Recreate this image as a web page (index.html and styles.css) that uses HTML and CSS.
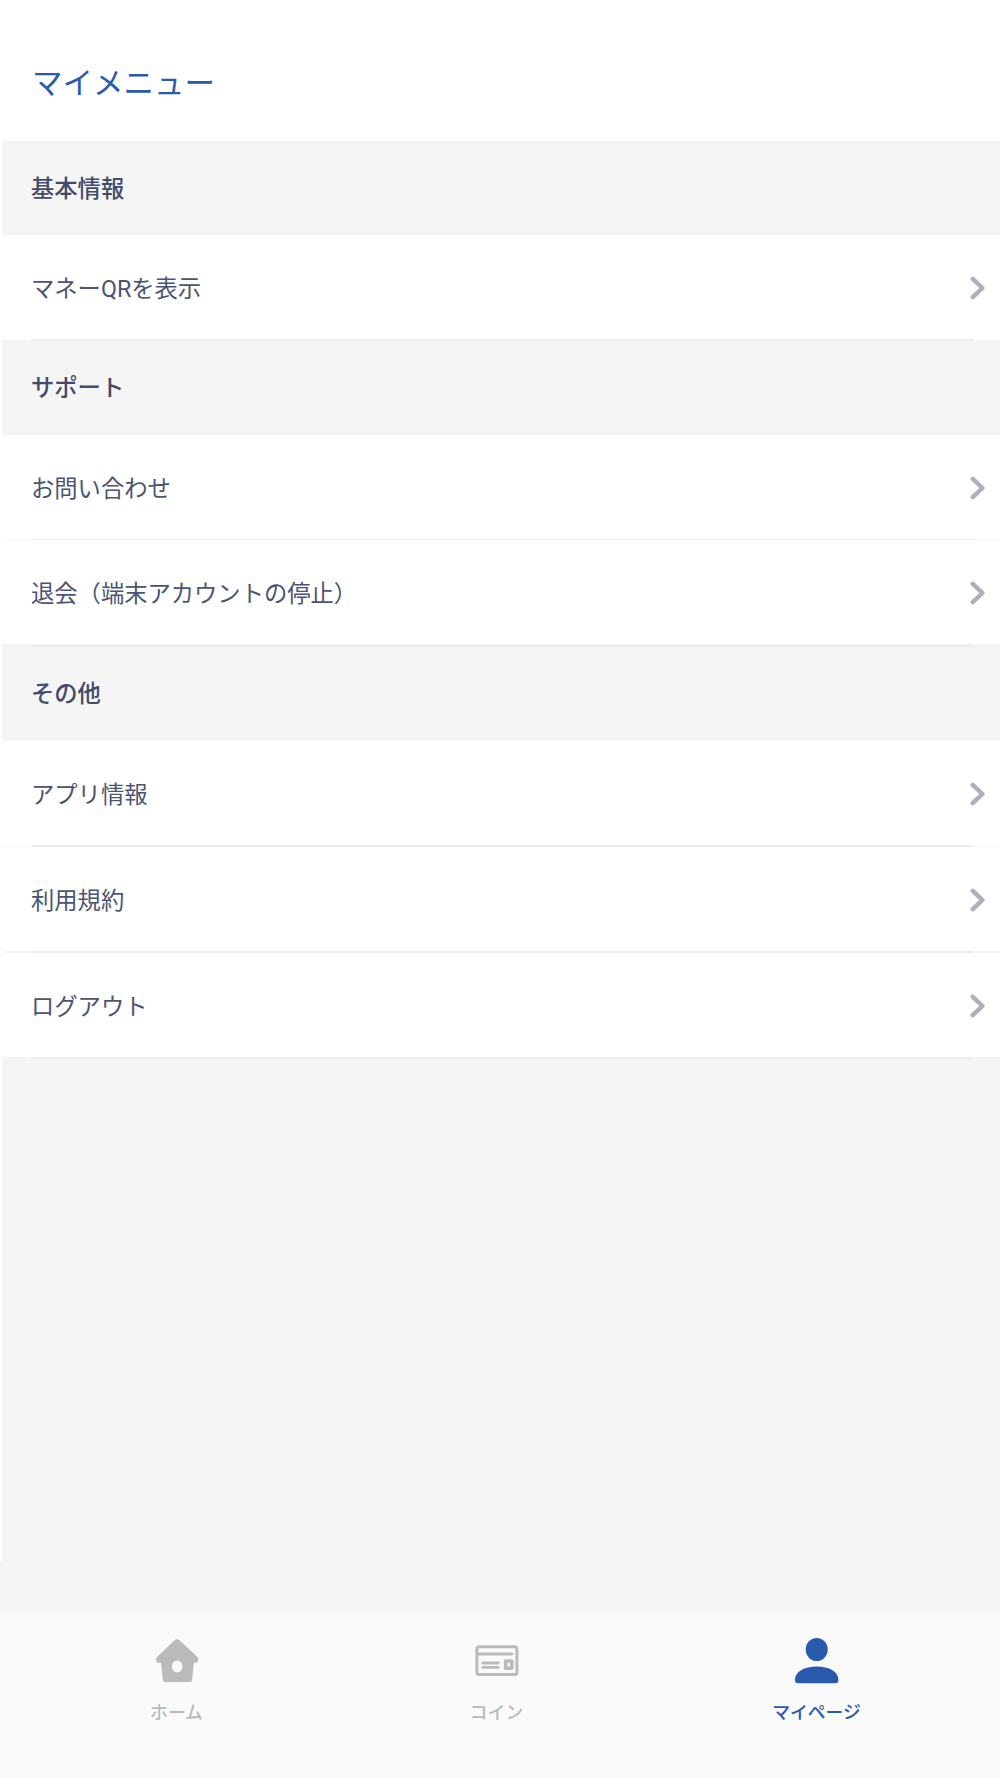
FILE: index.html
```html
<!DOCTYPE html>
<html lang="ja">
<head>
<meta charset="utf-8">
<title>マイメニュー</title>
<link rel="stylesheet" href="styles.css">
</head>
<body>
<svg class="defs" aria-hidden="true"><symbol id="chevron" viewBox="0 0 16 24"><path d="M2.8 2.8 12.4 12 2.8 21.2"/></symbol></svg>
<div class="screen">
<main class="content">
<header class="header"><h1 class="title">マイメニュー</h1></header>
<h2 class="section">基本情報</h2>
<ul class="list">
<li class="row"><span class="label">マネーQRを表示</span><svg class="chevron"><use href="#chevron"/></svg></li>
</ul>
<h2 class="section section-support">サポート</h2>
<ul class="list">
<li class="row row-divided"><span class="label">お問い合わせ</span><svg class="chevron"><use href="#chevron"/></svg></li>
<li class="row row-last"><span class="label">退会（端末アカウントの停止）</span><svg class="chevron"><use href="#chevron"/></svg></li>
</ul>
<h2 class="section section-other">その他</h2>
<ul class="list">
<li class="row row-app"><span class="label">アプリ情報</span><svg class="chevron"><use href="#chevron"/></svg></li>
<li class="row row-terms"><span class="label">利用規約</span><svg class="chevron"><use href="#chevron"/></svg></li>
<li class="row row-last"><span class="label">ログアウト</span><svg class="chevron"><use href="#chevron"/></svg></li>
</ul>
</main>
<nav class="tabs">
<a class="tab">
<svg class="icon" viewBox="0 0 44 46"><path d="M19.5 2.2Q22 .4 24.5 2.2L42.2 18.8Q44.4 21.4 42.6 23.8Q41 25.6 38.8 24.5L37.2 41.2Q37 44 34.8 44H9.8Q8 44 7.8 41.2L6 24.5Q4.2 25.8 2 24.3Q-.5 21.3 2 19Z" fill="currentColor"/><ellipse cx="22.2" cy="28.5" rx="5.3" ry="6" fill="#fafafa"/></svg>
<span>ホーム</span></a>
<a class="tab">
<svg class="icon" viewBox="0 0 44 46" fill="none" stroke="currentColor"><rect x="1.9" y="8.8" width="40" height="27.8" rx="2.4" stroke-width="3"/><path d="M3 16H37M7.7 25H23.3M7.7 29.4H23.3" stroke-width="2.8" stroke-linecap="round"/><rect x="30.6" y="23" width="6.2" height="7.2" stroke-width="3.6" stroke-linejoin="round"/></svg>
<span>コイン</span></a>
<a class="tab tab-active">
<svg class="icon" viewBox="0 0 44 46" fill="currentColor"><ellipse cx="21.7" cy="11.5" rx="11" ry="11.5"/><path d="M.1 40.5C.8 33.4 9 28.4 21.7 28.4S42.6 33.4 43.3 40.5V42.5Q43.3 45.2 40.7 45.2H2.7Q.1 45.2 .1 42.5Z"/></svg>
<span>マイページ</span></a>
</nav>
</div>
</body>
</html>
```
FILE: styles.css
```css
* { box-sizing: border-box; }
body {
  margin: 0;
  background: #f5f5f5;
  color: #4a5474;
  font-family: Roboto, "Noto Sans CJK JP", sans-serif;
}
.defs { display: none; }
.screen { display: flex; flex-direction: column; height: 1778px; }
.content { height: 1561px; border-left: 2px solid #fff; }
.header { height: 141px; padding: 62px 0 0 30px; background: #fff; }
.title {
  margin: 0;
  color: #285bae;
  font-size: 30.5px;
  font-weight: 400;
  line-height: 44px;
}
.section {
  height: 94px;
  margin: 0;
  padding: 1px 0 0 29px;
  font-size: 23.3px;
  font-weight: 500;
  line-height: 94px;
  color: #424b6b;
  background: #f5f5f5;
}
.section-support { height: 95px; padding-top: 2px; line-height: 93px; }
.section-other { height: 97px; line-height: 98px; }
.list { margin: 0; padding: 0; list-style: none; }
.row {
  position: relative;
  display: flex;
  align-items: center;
  justify-content: space-between;
  height: 105px;
  padding: 0 14px 0 29px;
  background: #fff;
}
.row::after {
  content: "";
  position: absolute;
  left: 29px;
  right: 27px;
  bottom: -1px;
  height: 2px;
  background: #eee;
}
.row-divided { padding-top: 2px; border-bottom: 1px solid #f7f7f7; }
.row-divided::after { bottom: -1px; height: 1px; }
.row-last { height: 104px; padding-top: 2px; }
.row-last::after { bottom: -3px; height: 3px; }
.row-app { height: 106px; border-bottom: 1px solid #f7f7f7; }
.row-app::after { bottom: -1px; }
.row-terms { height: 106px; padding-top: 1px; border-bottom: 2px solid #f7f7f7; }
.row-terms::after { bottom: -2px; }
.label { padding-top: 2px; font-size: 23.3px; line-height: 34px; }
.chevron {
  width: 16px;
  height: 24px;
  fill: none;
  stroke: #b0aebd;
  stroke-width: 4.4;
  stroke-linecap: round;
  stroke-linejoin: round;
}
.tabs {
  display: grid;
  grid-template-columns: repeat(3, 320px);
  justify-content: center;
  height: 164px;
  margin-top: 53px;
  padding-right: 7px;
  background: #fafafa;
}
.tab {
  display: flex;
  flex-direction: column;
  align-items: center;
  padding-top: 24px;
  color: #bababa;
  font-size: 17.8px;
  font-weight: 500;
  line-height: 26px;
}
.tab-active { color: #285bae; }
.icon { width: 44px; height: 46px; margin-bottom: 16px; }
```
